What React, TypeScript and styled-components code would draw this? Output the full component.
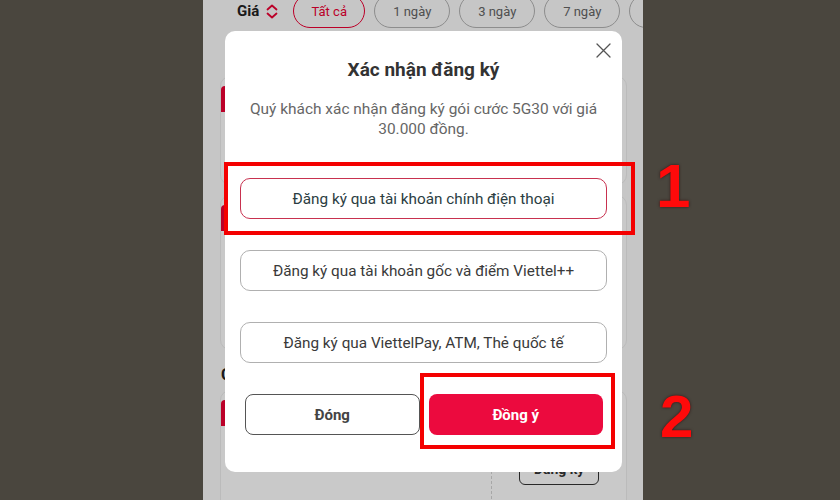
import React from "react";
import styled, { createGlobalStyle } from "styled-components";

const GlobalStyle = createGlobalStyle`
  html, body {
    margin: 0;
    padding: 0;
    background: #4a463e;
  }
  body {
    font-family: Roboto, "Liberation Sans", Arial, sans-serif;
  }
  * {
    box-sizing: border-box;
  }
`;

const Stage = styled.div`
  position: relative;
  display: flex;
  width: 840px;
  height: 500px;
  padding-left: 203px;
  overflow: hidden;
  background: #4a463e;
`;

const Phone = styled.div`
  position: relative;
  width: 440px;
  height: 100%;
  overflow: hidden;
  background: #fbfbfb;
`;

const Page = styled.div`
  display: flex;
  flex-direction: column;
`;

const FilterBar = styled.div`
  display: flex;
  align-items: center;
  height: 34px;
  margin-top: -6px;
  padding-left: 34px;
  white-space: nowrap;
`;

const FilterLabel = styled.span`
  font-size: 15px;
  font-weight: 700;
  color: #222;
`;

const SortIcon = styled.svg`
  flex-shrink: 0;
  margin: 0 15px 0 7px;
`;

const PillRow = styled.div`
  display: flex;
  gap: 9px;
`;

const Pill = styled.span<{ $active?: boolean; $width: number }>`
  flex-shrink: 0;
  display: inline-flex;
  align-items: center;
  justify-content: center;
  width: ${(p) => p.$width}px;
  height: 34px;
  border-radius: 17px;
  border: 1px solid ${(p) => (p.$active ? "#ee0033" : "#b3b3b3")};
  color: ${(p) => (p.$active ? "#ee0033" : "#666")};
  font-size: 13px;
`;

const CardList = styled.div`
  display: flex;
  flex-direction: column;
  margin-top: 48px;
  padding: 0 16px 0 17px;
`;

const Card = styled.div<{ $height: number }>`
  display: flex;
  height: ${(p) => p.$height}px;
  margin-bottom: 10px;
  background: #fff;
  border: 1px solid #ededed;
  border-radius: 10px;
  overflow: hidden;
`;

const Accent = styled.div`
  flex-shrink: 0;
  width: 6px;
  height: 26px;
  margin-top: 9px;
  background: #ee0033;
  border-top-left-radius: 4px;
`;

const CardBody = styled.div`
  flex: 1;
`;

const CardSide = styled.div`
  display: flex;
  justify-content: center;
  width: 135px;
  padding-top: 62px;
  border-left: 1px dashed #d4d4d4;
`;

const SectionTitle = styled.div`
  margin: 3px 0 3px;
  padding-left: 1px;
  font-size: 16px;
  line-height: 24px;
  font-weight: 700;
  color: #222;
`;

const SmallButton = styled.span`
  display: inline-flex;
  align-items: center;
  justify-content: center;
  width: 80px;
  height: 32px;
  border: 1px solid #333;
  border-radius: 6px;
  font-size: 14px;
  font-weight: 700;
  color: #333;
`;

const Scrim = styled.div`
  position: absolute;
  inset: 0;
  background: rgba(0, 0, 0, 0.21);
`;

const Modal = styled.div`
  position: absolute;
  top: 31px;
  left: 22px;
  width: 397px;
  display: flex;
  flex-direction: column;
  padding: 27px 15px 37px;
  background: #fff;
  border-radius: 10px;
`;

const CloseButton = styled.button`
  position: absolute;
  top: 12px;
  right: 11px;
  width: 15px;
  height: 15px;
  padding: 0;
  border: none;
  background: none;
  display: flex;
`;

const Title = styled.h2`
  margin: 0;
  text-align: center;
  font-size: 19px;
  line-height: 24px;
  font-weight: 700;
  color: #333;
`;

const Message = styled.p`
  margin: 17px 0 0;
  text-align: center;
  font-size: 15.45px;
  line-height: 20px;
  color: #666;
  white-space: nowrap;
`;

const OptionList = styled.div`
  display: flex;
  flex-direction: column;
  gap: 31px;
  margin-top: 39px;
`;

const Option = styled.button<{ $selected?: boolean }>`
  height: 41px;
  border: 1px solid ${(p) => (p.$selected ? "#c8314f" : "#b0b0b0")};
  border-radius: 10px;
  background: #fff;
  font-family: inherit;
  font-size: 15.3px;
  color: ${(p) => (p.$selected ? "#2b3d42" : "#3a3a3a")};
`;

const Actions = styled.div`
  display: grid;
  grid-template-columns: 1fr 1fr;
  gap: 9px;
  margin-top: 31px;
  padding: 0 4px 0 5px;
`;

const ActionButton = styled.button<{ $primary?: boolean }>`
  height: 41px;
  border-radius: 8px;
  border: ${(p) => (p.$primary ? "none" : "1px solid #555")};
  background: ${(p) => (p.$primary ? "#ec0a3e" : "#fff")};
  color: ${(p) => (p.$primary ? "#fff" : "#444")};
  font-family: inherit;
  font-size: 15px;
  font-weight: 700;
`;

const Marker = styled.div<{ $x: number; $y: number; $w: number; $h: number }>`
  position: absolute;
  left: ${(p) => p.$x}px;
  top: ${(p) => p.$y}px;
  width: ${(p) => p.$w}px;
  height: ${(p) => p.$h}px;
  border: 4px solid #f40000;
  pointer-events: none;
`;

const StepNumber = styled.div<{ $x: number; $y: number; $size: number }>`
  position: absolute;
  left: ${(p) => p.$x}px;
  top: ${(p) => p.$y}px;
  font-family: "Liberation Sans", Arial, sans-serif;
  font-size: ${(p) => p.$size}px;
  line-height: ${(p) => p.$size}px;
  font-weight: 700;
  color: #ff0a0a;
  text-shadow: 0 0 3px rgba(40, 0, 0, 0.7);
`;

// the last pill is only an edge peeking in at the right of the screen
const filters = [
  { label: "Tất cả", width: 72, active: true },
  { label: "1 ngày", width: 76 },
  { label: "3 ngày", width: 76 },
  { label: "7 ngày", width: 76 },
  { label: "", width: 76 },
];

const options = [
  "Đăng ký qua tài khoản chính điện thoại",
  "Đăng ký qua tài khoản gốc và điểm Viettel++",
  "Đăng ký qua ViettelPay, ATM, Thẻ quốc tế",
];

export default function App() {
  return (
    <>
      <GlobalStyle />
      <Stage>
        <Phone>
          <Page>
            <FilterBar>
              <FilterLabel>Giá</FilterLabel>
              <SortIcon width="12" height="15" viewBox="0 0 12 15" fill="none">
                <path
                  d="M1.5 5.5 6 1.5l4.5 4M1.5 9.5 6 13.5l4.5-4"
                  stroke="#ee0033"
                  strokeWidth="1.8"
                  strokeLinecap="round"
                  strokeLinejoin="round"
                />
              </SortIcon>
              <PillRow>
                {filters.map((f, i) => (
                  <Pill key={i} $active={f.active} $width={f.width}>
                    {f.label}
                  </Pill>
                ))}
              </PillRow>
            </FilterBar>

            <CardList>
              <Card $height={109}>
                <Accent />
                <CardBody />
              </Card>
              <Card $height={155}>
                <Accent />
                <CardBody />
              </Card>
              <SectionTitle>Combo ưu đãi</SectionTitle>
              <Card $height={140}>
                <Accent />
                <CardBody />
                <CardSide>
                  <SmallButton>Đăng ký</SmallButton>
                </CardSide>
              </Card>
            </CardList>
          </Page>

          <Scrim />

          <Modal>
            <CloseButton aria-label="Đóng">
              <svg width="15" height="15" viewBox="0 0 15 15" fill="none">
                <path d="M1 1l13 13M14 1 1 14" stroke="#555" strokeWidth="1.3" strokeLinecap="round" />
              </svg>
            </CloseButton>
            <Title>Xác nhận đăng ký</Title>
            <Message>
              Quý khách xác nhận đăng ký gói cước 5G30 với giá
              <br />
              30.000 đồng.
            </Message>
            <OptionList>
              {options.map((o, i) => (
                <Option key={o} $selected={i === 0}>
                  {o}
                </Option>
              ))}
            </OptionList>
            <Actions>
              <ActionButton>Đóng</ActionButton>
              <ActionButton $primary>Đồng ý</ActionButton>
            </Actions>
          </Modal>
        </Phone>

        <Marker $x={224} $y={162} $w={411} $h={73} />
        <Marker $x={420} $y={373} $w={195} $h={76} />
        <StepNumber $x={656} $y={155} $size={62}>1</StepNumber>
        <StepNumber $x={660} $y={387} $size={60}>2</StepNumber>
      </Stage>
    </>
  );
}
